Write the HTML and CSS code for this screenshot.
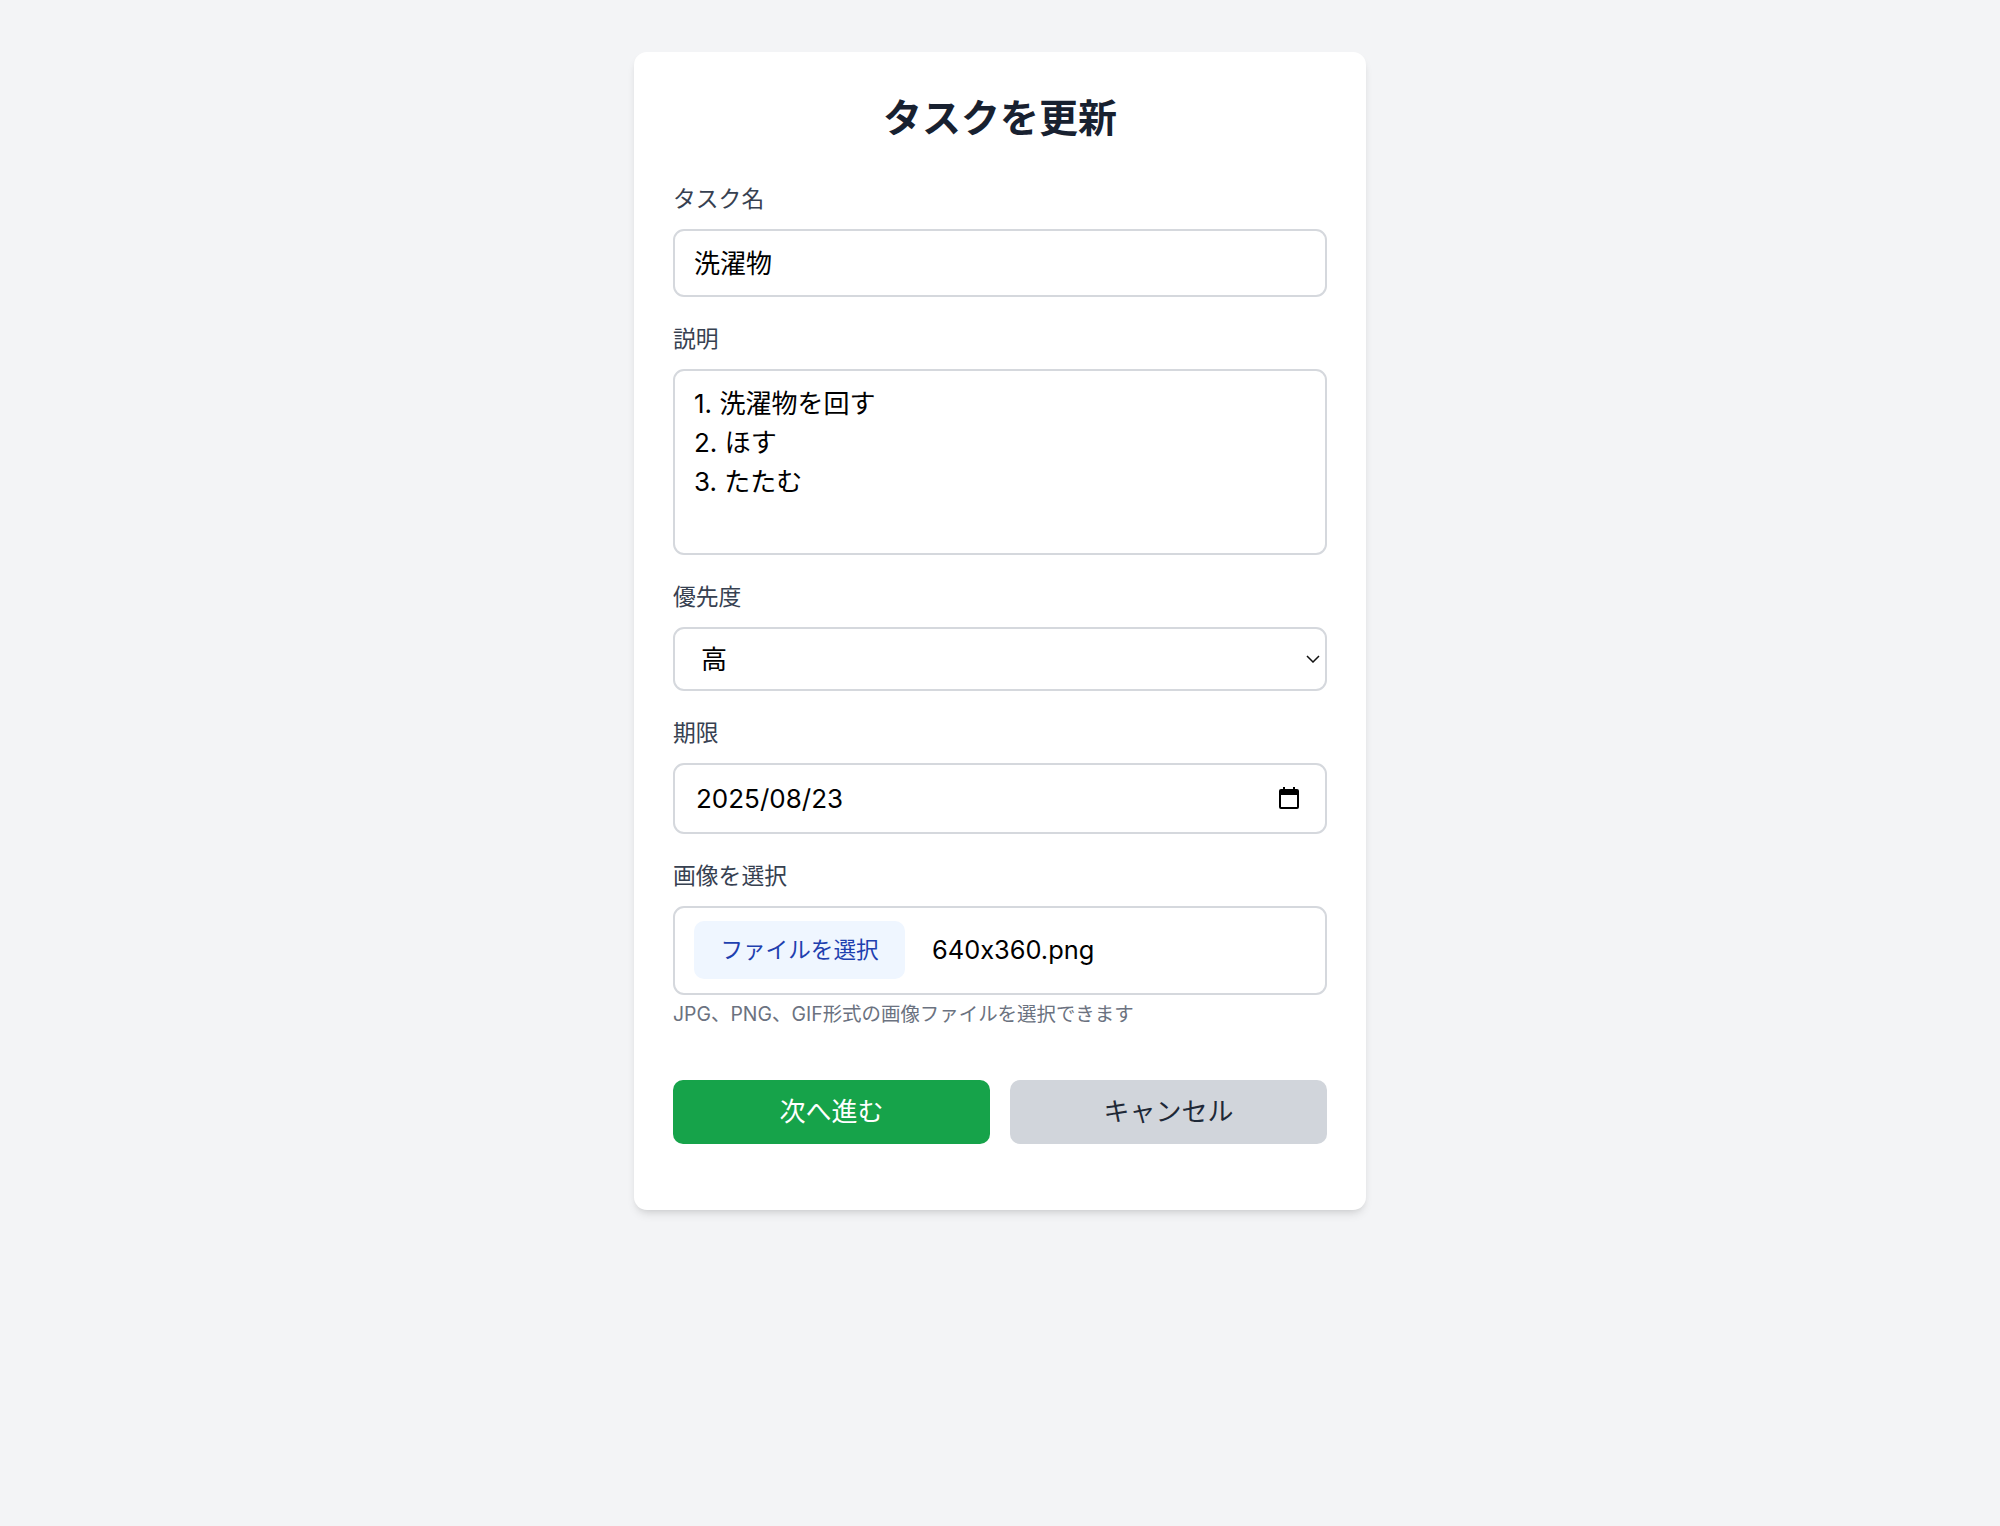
FILE: index.html
```html
<!DOCTYPE html>
<html lang="ja">
<head>
  <meta charset="UTF-8">
  <meta name="viewport" content="width=device-width, initial-scale=1.0">
  <title>タスクを更新</title>
  <link rel="stylesheet" href="styles.css">
</head>
<body>

  <div class="card">
    <h1>タスクを更新</h1>
    <form>
      <div class="field">
        <label for="name">タスク名</label>
        <input class="control name-input" id="name" type="text" value="洗濯物">
      </div>

      <div class="field">
        <label for="description">説明</label>
        <textarea class="control description-input" id="description">1. 洗濯物を回す
2. ほす
3. たたむ</textarea>
      </div>

      <div class="field">
        <label for="priority">優先度</label>
        <div class="select-wrap">
          <select class="control priority-input" id="priority">
            <option>高</option>
            <option>中</option>
            <option>低</option>
          </select>
          <svg class="chevron" viewBox="0 0 14 8" fill="none" stroke="#111" stroke-width="1.5">
            <path d="M1 1l6 6 6-6"/>
          </svg>
        </div>
      </div>

      <div class="field">
        <label for="due">期限</label>
        <div class="date-wrap">
          <input class="control due-input" id="due" type="text" value="2025/08/23">
          <svg class="calendar" viewBox="0 0 20 22">
            <path d="M4 0h2v3H4zM14 0h2v3h-2z" fill="#000"/>
            <path d="M2 2h16a2 2 0 0 1 2 2v16a2 2 0 0 1-2 2H2a2 2 0 0 1-2-2V4a2 2 0 0 1 2-2zm0 6v12h16V8z" fill="#000" fill-rule="evenodd"/>
          </svg>
        </div>
      </div>

      <div class="field">
        <label>画像を選択</label>
        <div class="control file-box">
          <span class="file-btn">ファイルを選択</span>
          <span class="file-name">640x360.png</span>
        </div>
        <p class="hint">JPG、PNG、GIF形式の画像ファイルを選択できます</p>
      </div>

      <div class="actions">
        <button class="btn btn-next" type="button">次へ進む</button>
        <button class="btn btn-cancel" type="button">キャンセル</button>
      </div>
    </form>
  </div>

</body>
</html>
```

FILE: styles.css
```css
body {
  box-sizing: border-box;
  font-family: Inter, "Noto Sans CJK JP", sans-serif;
  font-feature-settings: "calt" 0;
  margin: 0;
  padding-top: 52px;
  min-height: 1526px;
  background-color: #f3f4f6;
  color: #1f2937;
}

.card {
  box-sizing: border-box;
  width: 732px;
  height: 1158px;
  margin: 0 auto;
  padding: 40px 39px;
  background: #fff;
  border-radius: 13px;
  box-shadow: 0 6px 10px -2px rgba(0, 0, 0, 0.1), 0 3px 6px -3px rgba(0, 0, 0, 0.1);
}

h1 {
  margin: 0 0 39px;
  font-size: 39px;
  line-height: 52px;
  font-weight: 700;
  text-align: center;
  color: #182130;
}

.field {
  margin-bottom: 26px;
}

label {
  display: block;
  margin-bottom: 14px;
  font-size: 22.8px;
  line-height: 32px;
  color: #374151;
}

.control {
  display: block;
  box-sizing: border-box;
  width: 100%;
  margin: 0;
  border: 2px solid #d5d8dd;
  border-radius: 11px;
  background: #fff;
  font-family: inherit;
  font-feature-settings: "calt" 0;
  font-size: 26px;
  color: #000;
  outline: none;
}

.name-input {
  height: 68px;
  padding: 0 19px 4px;
}

.description-input {
  height: 186px;
  padding: 13px 19px;
  line-height: 39px;
  resize: none;
}

.select-wrap,
.date-wrap {
  position: relative;
}

.priority-input {
  height: 64px;
  padding: 0 20px 0 26px;
  appearance: none;
}

.chevron {
  position: absolute;
  top: 28px;
  right: 7px;
  width: 14px;
  height: 8px;
}

.due-input {
  height: 71px;
  padding: 0 21px;
}

.calendar {
  position: absolute;
  top: 24px;
  right: 28px;
  width: 20px;
  height: 22px;
}

.file-box {
  display: flex;
  align-items: center;
  height: 89px;
  padding: 0 19px 2px;
}

.file-btn {
  width: 211px;
  height: 58px;
  margin-right: 27px;
  border-radius: 10px;
  background: #eff6ff;
  color: #1e40af;
  font-size: 22.6px;
  line-height: 58px;
  text-align: center;
}

.file-name {
  font-size: 25.4px;
}

.hint {
  margin: 6px 0 0;
  font-size: 19.45px;
  line-height: 26px;
  color: #6b7280;
}

.actions {
  display: flex;
  gap: 20px;
  margin-top: 53px;
}

.btn {
  flex: 1;
  height: 64px;
  padding: 0 0 6px;
  border: none;
  border-radius: 10px;
  font-family: inherit;
  font-size: 26px;
  font-weight: 400;
}

.btn-next {
  background-color: #16a34a;
  color: #fff;
}

.btn-cancel {
  background-color: #d1d5db;
  color: #1f2937;
}
```
